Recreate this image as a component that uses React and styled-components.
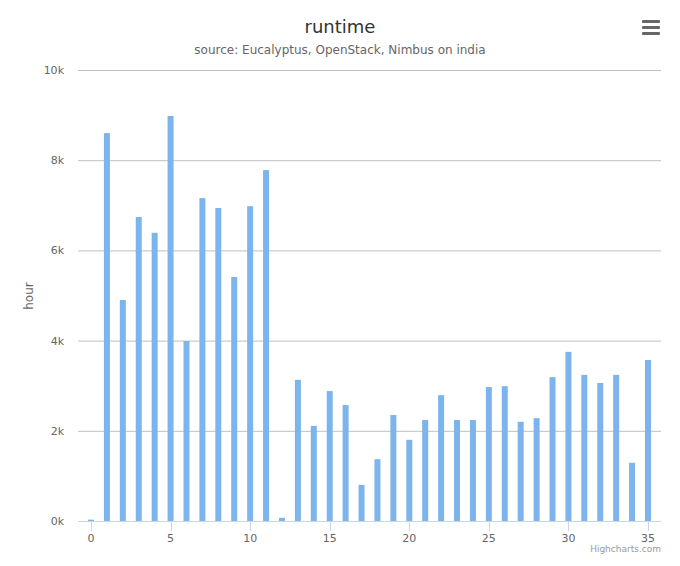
import React from "react";
import styled, { createGlobalStyle } from "styled-components";

const Global = createGlobalStyle`
  body { margin: 0; background: #fff; font-family: "DejaVu Sans", "Lucida Grande", sans-serif; }
`;
const Wrap = styled.div`
  position: relative; width: 680px; height: 566px; overflow: hidden;
  display: flex; flex-direction: column;
`;
const Header = styled.div`
  height: 60px; display: flex; flex-direction: column; align-items: center;
`;
const Title = styled.div`
  margin-top: 16px; font-size: 18px; color: #333; line-height: 22px;
`;
const Subtitle = styled.div`
  margin-top: 4px; font-size: 12px; color: #666; line-height: 16px;
`;
const Menu = styled.div`
  position: absolute; top: 20px; right: 20px; width: 18px;
  display: flex; flex-direction: column; gap: 3px;
  span { display: block; height: 3px; background: #666; border-radius: 1px; }
`;

const values = [30,8600,4900,6740,6390,8980,3990,7160,6940,5410,6980,7780,70,3130,2110,2880,2570,800,1370,2350,1800,2240,2790,2240,2240,2970,2990,2200,2280,3190,3750,3240,3060,3240,1290,3570];
const OFF = 60;
const y0 = 521 - OFF, yTop = 70 - OFF;
const ys = (v) => y0 - (v / 10000) * (y0 - yTop);
const xs = (i) => 91 + i * (648 - 91) / 35;

export default function App() {
  return (
    <Wrap>
      <Global />
      <Header>
        <Title>runtime</Title>
        <Subtitle>source: Eucalyptus, OpenStack, Nimbus on india</Subtitle>
      </Header>
      <Menu><span /><span /><span /></Menu>
      <svg width="680" height="506" style={{ display: "block" }}>
        {[0, 2000, 4000, 6000, 8000, 10000].map((v) => (
          <g key={v}>
            {v > 0 && <line x1="78" x2="661" y1={ys(v) + 0.5} y2={ys(v) + 0.5} stroke="#c0c0c0" />}
            <text x="64" y={ys(v) + 4} fontSize="11" fill="#666" textAnchor="end">{v / 1000}k</text>
          </g>
        ))}
        <line x1="78" x2="661" y1={y0 + 0.5} y2={y0 + 0.5} stroke="#ccd6eb" />
        {values.map((v, i) => (
          <rect key={i} x={xs(i) - 3} y={ys(v)} width="6" height={y0 - ys(v)} fill="#7cb5ec" />
        ))}
        {[0, 5, 10, 15, 20, 25, 30, 35].map((t) => (
          <g key={t}>
            <line x1={Math.round(xs(t)) + 0.5} x2={Math.round(xs(t)) + 0.5} y1={y0} y2={y0 + 10} stroke="#ccd6eb" />
            <text x={xs(t)} y={y0 + 21} fontSize="11" fill="#666" textAnchor="middle">{t}</text>
          </g>
        ))}
        <text transform={`translate(33 ${296 - OFF}) rotate(-90)`} fontSize="12" fill="#666" textAnchor="middle">hour</text>
        <text x="661" y={552 - OFF} fontSize="9" fill="#999" textAnchor="end">Highcharts.com</text>
      </svg>
    </Wrap>
  );
}
